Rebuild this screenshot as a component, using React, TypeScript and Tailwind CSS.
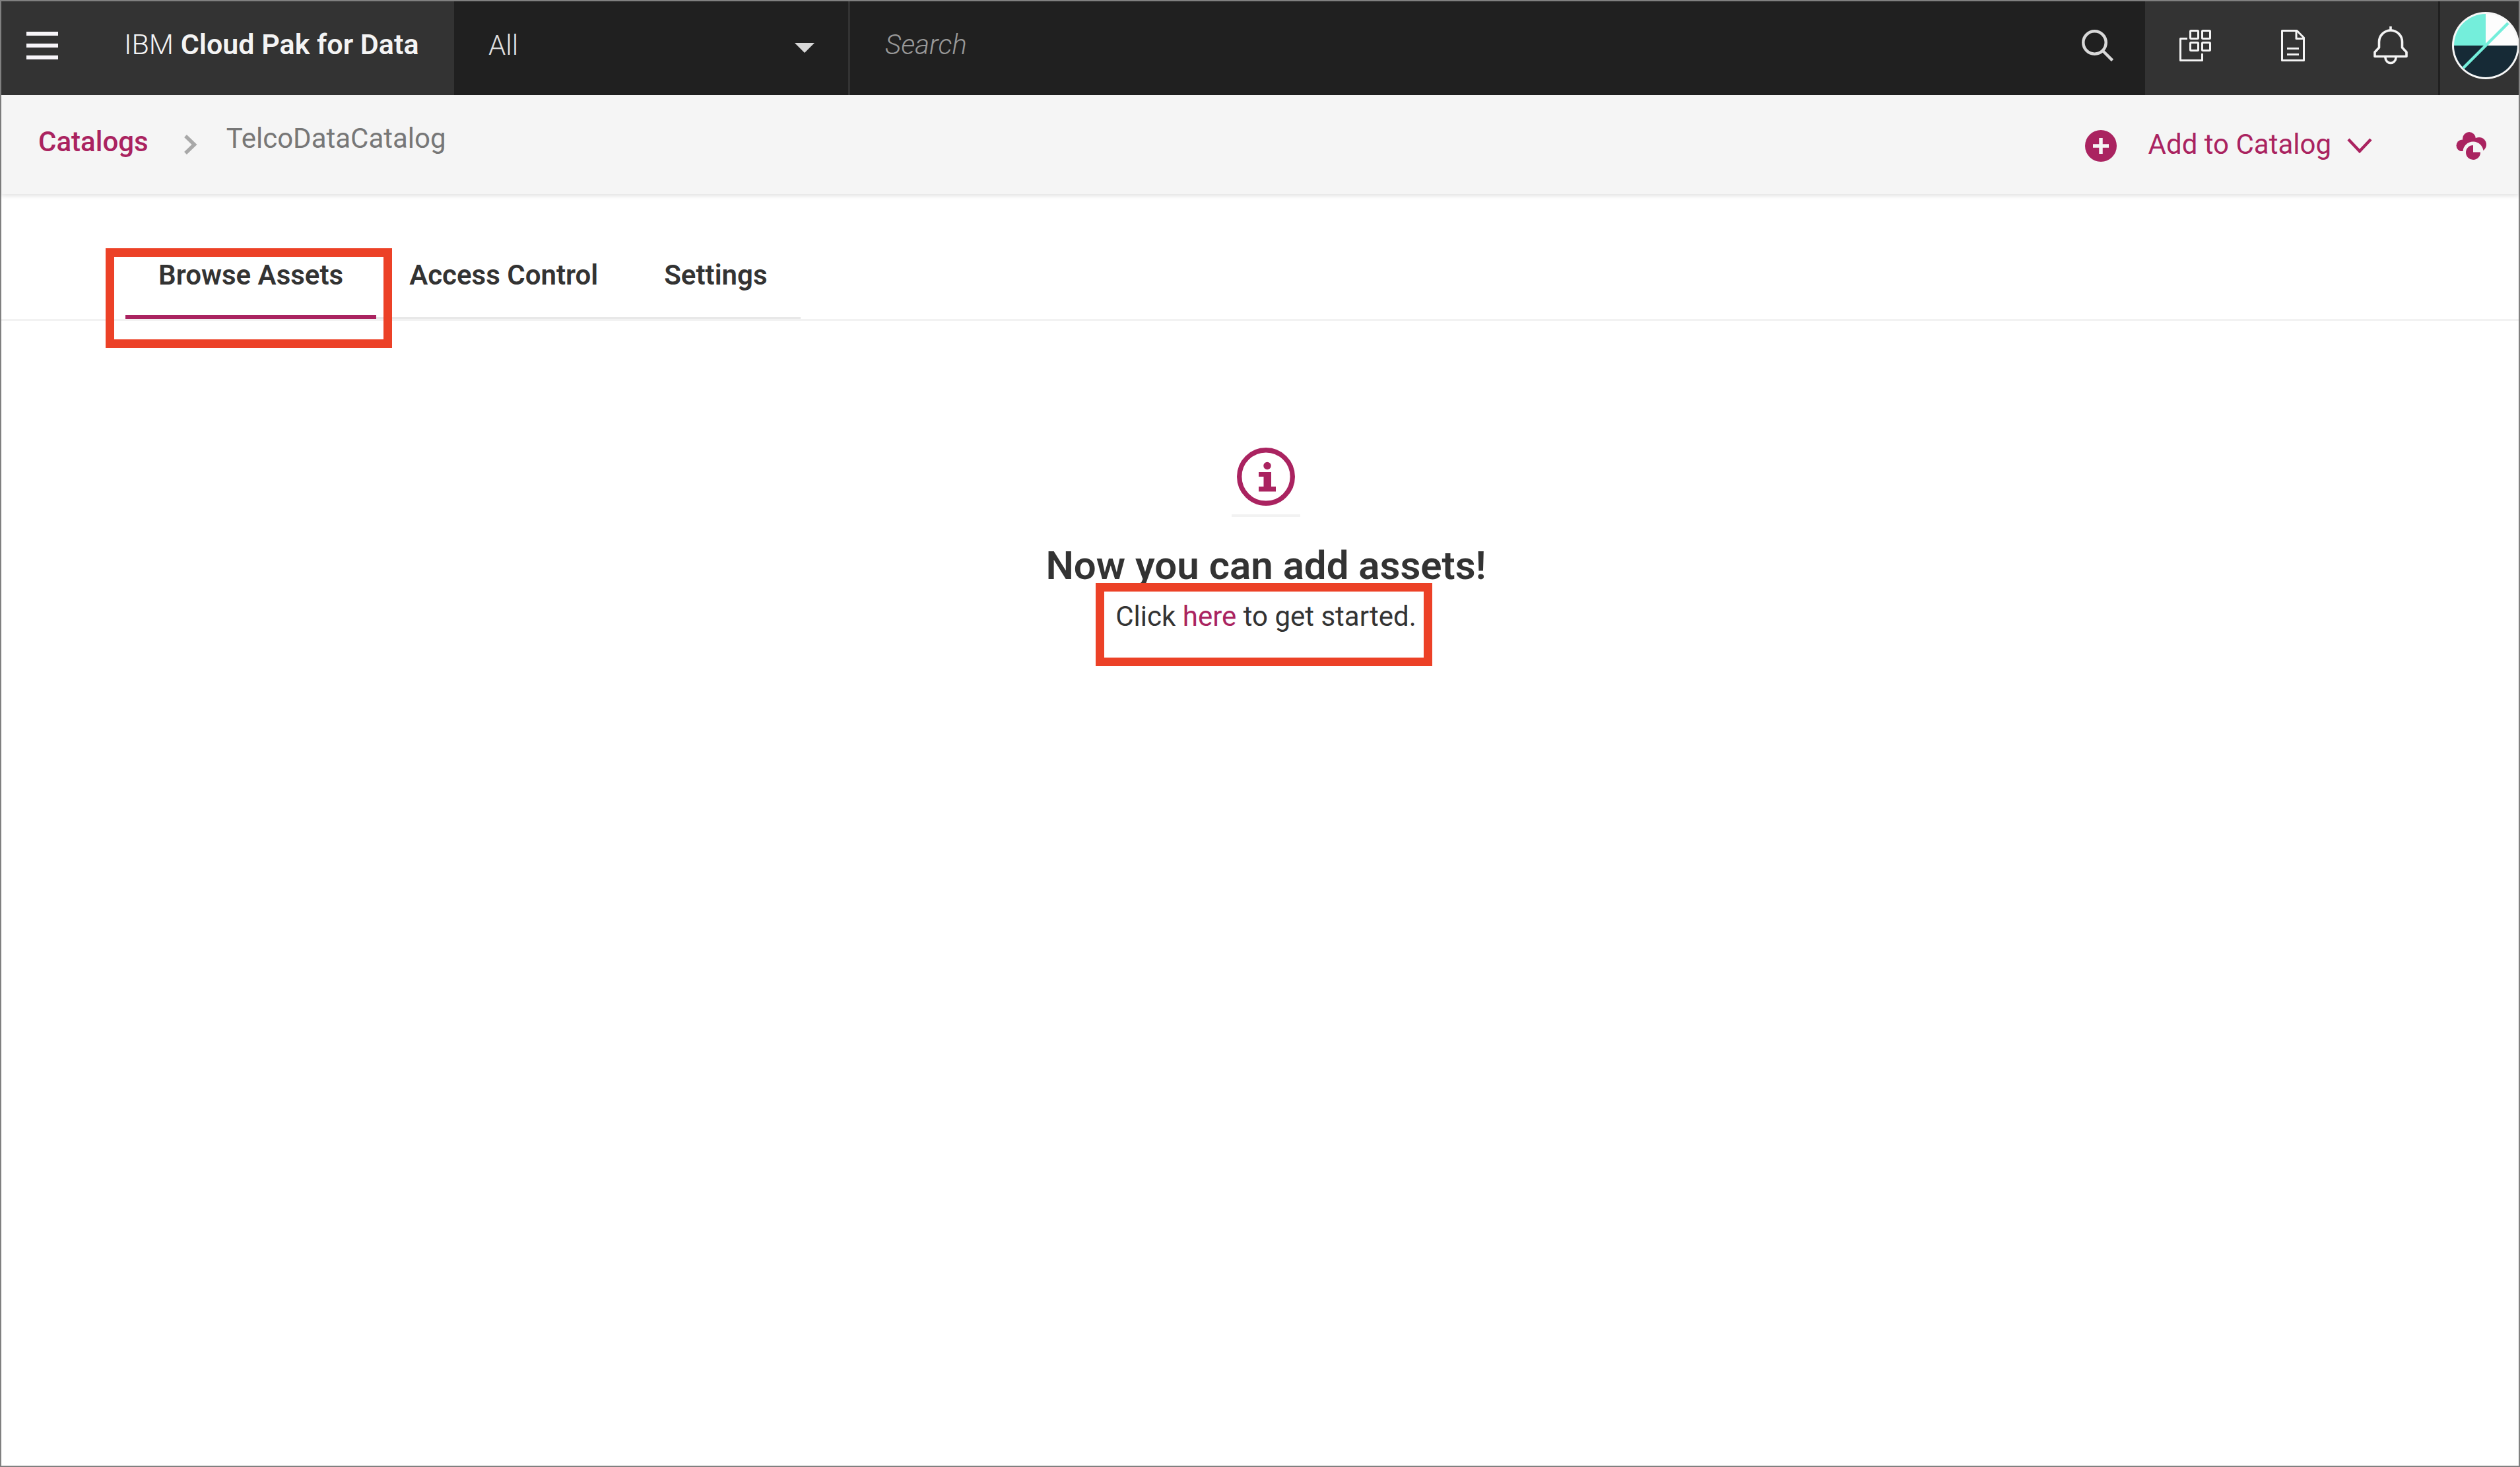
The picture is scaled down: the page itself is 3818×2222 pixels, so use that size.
import type { ReactNode } from 'react';

function SearchIcon() {
  return (
    <svg className="size-12" viewBox="0 0 48 48" fill="none" stroke="#d8d8d8" strokeWidth="4.5" aria-hidden="true">
      <circle cx="19.5" cy="19.5" r="17.2" />
      <path d="M32.5 32.5 46.5 46.5" />
    </svg>
  );
}

function AppsIcon() {
  return (
    <svg className="size-12" viewBox="0 0 48 48" fill="none" stroke="#f4f4f4" strokeWidth="3" strokeLinejoin="round" aria-hidden="true">
      <rect x="16.5" y="1.5" width="12" height="12" rx="1" />
      <rect x="34.5" y="1.5" width="12" height="12" rx="1" />
      <rect x="16.5" y="19.5" width="12" height="12" rx="1" />
      <rect x="34.5" y="19.5" width="12" height="12" rx="1" />
      <path d="M12 13.5H1.5V46.5H34.5V36" />
    </svg>
  );
}

function DocumentIcon() {
  return (
    <svg className="h-12 w-9" viewBox="0 0 36 48" fill="none" stroke="#f4f4f4" strokeWidth="3" strokeLinejoin="round" aria-hidden="true">
      <path d="M1.5 1.5H24L34.5 12V46.5H1.5Z" />
      <path d="M23 1.5V13.5H34.5" />
      <path d="M9 28.5H27M9 37.5H27" />
    </svg>
  );
}

function BellIcon() {
  return (
    <svg className="h-[58px] w-[52px]" viewBox="16 11 52 58" fill="none" stroke="#f4f4f4" strokeWidth="3.6" strokeLinejoin="round" aria-hidden="true">
      <path d="M18 56.5V50L24.5 43V34.5A17.5 17.5 0 0 1 59.5 34.5V43L66 50V56.5Z" />
      <path d="M42 11V17" />
      <path d="M33.8 57.5C34.5 69.5 49.5 69.5 50.2 57.5" />
    </svg>
  );
}

function Avatar() {
  return (
    <svg className="size-[102px] shrink-0" viewBox="0 0 102 102" aria-hidden="true">
      <circle cx="51" cy="51" r="51" fill="#f7f7f7" />
      <path d="M51 51V3A48 48 0 0 1 99 51Z" fill="#fdfdfd" />
      <path d="M51 51H3A48 48 0 0 1 51 3Z" fill="#74eedb" />
      <path d="M3 51H99A48 48 0 0 1 3 51Z" fill="#162a36" />
      <path d="M17 85 85 17" stroke="#74eedb" strokeWidth="4.5" />
    </svg>
  );
}

function CloudUsageIcon() {
  return (
    <svg className="h-11 w-12" viewBox="0 0 48 44" fill="#aa2360" aria-hidden="true">
      <mask id="clock-gap">
        <rect width="48" height="30" fill="#fff" />
        <circle cx="27" cy="31" r="15.5" fill="#000" />
      </mask>
      <g mask="url(#clock-gap)">
        <circle cx="10.5" cy="21.5" r="9" />
        <circle cx="21" cy="11" r="10" />
        <circle cx="36" cy="20" r="11" />
        <rect x="11" y="13" width="25" height="17" />
      </g>
      <path d="M27 31.5V21A11 11 0 1 0 38 31.5Z" />
    </svg>
  );
}

function InfoIcon() {
  return (
    <svg className="size-[88px]" viewBox="0 0 88 88" aria-hidden="true">
      <circle cx="44" cy="44" r="40.3" fill="none" stroke="#aa2360" strokeWidth="7.4" />
      <circle cx="46" cy="27.5" r="5.7" fill="#aa2360" />
      <path d="M33 37H52V59H59V66.5H33V59H40.5V44H33Z" fill="#aa2360" />
    </svg>
  );
}

const highlight = 'pointer-events-none absolute z-10 border-[13px] border-[#ec4127]';

function Tab({ label, active, children }: { label: string; active?: boolean; children?: ReactNode }) {
  return (
    <button
      type="button"
      role="tab"
      aria-selected={!!active}
      className={
        'relative flex h-[93px] items-start px-[50px] font-semibold ' +
        (active ? 'border-b-6 border-[#aa2360]' : 'border-b-3 border-[#e8e8e8]')
      }
    >
      {label}
      {children}
    </button>
  );
}

const cell = 'flex w-[148px] items-center justify-center pb-2 pl-[3px]';

export default function App() {
  return (
    <div className="flex min-h-screen flex-col border-2 border-[#808080] bg-white font-[Roboto,sans-serif] text-[42px] leading-[54px] text-[#333333]">
      <header className="flex h-[142px] bg-[#202020] text-[#f4f4f4]">
        <div className="flex w-[686px] items-center bg-[#333333] pl-[38px]">
          <button type="button" aria-label="Menu" className="flex w-12 flex-col gap-3 pb-2">
            <span className="h-[6px] bg-[#f7f5f9]" />
            <span className="h-[6px] bg-[#f7f5f9]" />
            <span className="h-[6px] bg-[#f7f5f9]" />
          </button>
          <a href="#" className="ml-[100px] pb-3 text-[43px] whitespace-nowrap">
            <span className="font-light">IBM</span> <span className="font-semibold">Cloud Pak for Data</span>
          </a>
        </div>

        <div className="relative w-[600px] border-r-3 border-[#333333]">
          <select aria-label="Search scope" className="size-full appearance-none bg-transparent pb-2 pl-[52px] font-light text-[#e0e0e0]">
            <option>All</option>
          </select>
          <svg className="pointer-events-none absolute top-[63px] right-[51px] h-[15px] w-[30px]" viewBox="0 0 30 15" fill="#d8d8d8" aria-hidden="true">
            <path d="M0 0H30L15 15Z" />
          </svg>
        </div>

        <form role="search" className="flex flex-1 items-center">
          <input
            type="text"
            aria-label="Search"
            placeholder="Search"
            className="h-full flex-1 bg-transparent pb-3 pl-[53px] outline-none placeholder:font-light placeholder:text-[#999999] placeholder:italic"
          />
          <button type="button" aria-label="Submit search" className="pr-12 pb-2">
            <SearchIcon />
          </button>
        </form>

        <div className="flex bg-[#333333]">
          <button type="button" aria-label="Switch application" className={cell}>
            <AppsIcon />
          </button>
          <button type="button" aria-label="Documentation" className={cell}>
            <DocumentIcon />
          </button>
          <button type="button" aria-label="Notifications" className={cell}>
            <BellIcon />
          </button>
          <button type="button" aria-label="Profile" className="flex w-[122px] items-center overflow-hidden border-l-3 border-[#202020] pb-2 pl-[18px]">
            <Avatar />
          </button>
        </div>
      </header>

      <div className="flex h-[150px] items-center justify-between bg-[#f5f5f5] pr-12 pl-[56px] shadow-[0_3px_6px_rgba(0,0,0,0.11)]">
        <nav aria-label="Breadcrumb" className="flex items-center">
          <a href="#" className="pb-2 font-medium text-[#aa2360]">
            Catalogs
          </a>
          <svg className="ml-[54px] h-[30px] w-5" viewBox="0 0 20 30" fill="none" stroke="#a8a8a8" strokeWidth="5.5" aria-hidden="true">
            <path d="M2 2 15.5 15 2 28" />
          </svg>
          <span aria-current="page" className="ml-11 pb-[18px] text-[#777777]">
            TelcoDataCatalog
          </span>
        </nav>

        <div className="flex items-center text-[#aa2360]">
          <button type="button" className="flex items-center">
            <svg className="mt-1 size-12" viewBox="0 0 48 48" aria-hidden="true">
              <circle cx="24" cy="24" r="24" fill="#aa2360" />
              <path d="M24 12V36M12 24H36" stroke="#f5f5f5" strokeWidth="5.5" />
            </svg>
            <span className="ml-12">Add to Catalog</span>
            <svg className="mt-1 ml-6 h-6 w-[38px]" viewBox="0 0 38 24" fill="none" stroke="#aa2360" strokeWidth="4.5" aria-hidden="true">
              <path d="M2 2 19 20 36 2" />
            </svg>
          </button>
          <button type="button" aria-label="Catalog usage" className="mt-1 ml-[126px]">
            <CloudUsageIcon />
          </button>
        </div>
      </div>

      <div role="tablist" aria-label="Catalog sections" className="flex border-b-3 border-[#f2f2f2] pt-24 pl-[188px]">
        <Tab label="Browse Assets" active>
          <span className={highlight + ' -top-[14px] -right-6 -bottom-[50px] -left-[30px]'} />
        </Tab>
        <Tab label="Access Control" />
        <Tab label="Settings" />
      </div>

      <main className="flex flex-1 flex-col items-center pt-48 pl-[18px]">
        <div className="border-b-4 border-[#f2f2f2] px-2 pb-[13px]">
          <InfoIcon />
        </div>
        <h1 className="mt-[38px] text-[60px] leading-[72px] font-semibold">Now you can add assets!</h1>
        <p className="relative mt-[14px]">
          Click{' '}
          <a href="#" className="text-[#aa2360]">
            here
          </a>{' '}
          to get started.
          <span className={highlight + ' -top-6 -right-6 -bottom-[48px] -left-[30px]'} />
        </p>
      </main>
    </div>
  );
}
